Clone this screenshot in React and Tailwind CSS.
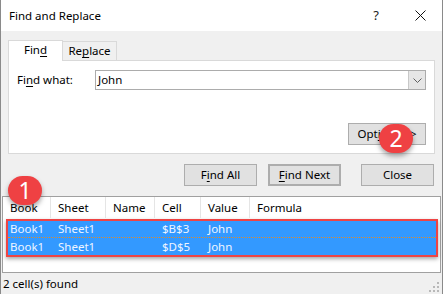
import React from 'react';

const U = ({ children }) => <span className="underline underline-offset-2 decoration-1">{children}</span>;

const Btn = ({ children, className = '' }) => (
    <div className={`h-[22px] w-[73px] flex items-center justify-center bg-[#e1e1e1] border border-[#adadad] text-[11.5px] text-black ${className}`}>
        {children}
    </div>
);

const Badge = ({ n, className }) => (
    <div className={`absolute w-[34px] h-[29px] rounded-full bg-[#ef4143] flex items-center justify-center text-white text-[23px] leading-none shadow-[0_3px_5px_rgba(0,0,0,0.35)] z-20 ${className}`}>
        {n}
    </div>
);

// column widths: header from list's inner left edge (x=3)
const cols = [
    { label: 'Book', w: 'w-[47px]', rw: 'w-[43px]' },
    { label: 'Sheet', w: 'w-[55px]', rw: 'w-[55px]' },
    { label: 'Name', w: 'w-[49px]', rw: 'w-[49px]' },
    { label: 'Cell', w: 'w-[46px]', rw: 'w-[46px]' },
    { label: 'Value', w: 'w-[49px]', rw: 'w-[49px]' },
    { label: 'Formula', w: 'flex-1', rw: 'flex-1' },
];

const rows = [
    ['Book1', 'Sheet1', '', '$B$3', 'John', ''],
    ['Book1', 'Sheet1', '', '$D$5', 'John', ''],
];

export default function App() {
    return (
        <div className="relative w-[443px] h-[294px] bg-[#f0f0f0] border-x border-[#8a8a8a] overflow-hidden text-black" style={{ fontFamily: '"Noto Sans", sans-serif' }}>
            {/* Title bar */}
            <div className="h-[31px] bg-white flex items-center pl-[8px] pr-[16px]">
                <span className="text-[11.5px]">Find and Replace</span>
                <span className="ml-auto text-[13px] text-[#222]">?</span>
                <svg className="ml-[36px]" width="11" height="11" viewBox="0 0 11 11">
                    <path d="M0.5 0.5 L10.5 10.5 M10.5 0.5 L0.5 10.5" stroke="#111" strokeWidth="1" />
                </svg>
            </div>

            {/* Tabs */}
            <div className="flex items-end h-[21px] mt-[8px] ml-[7px]">
                <div className="w-[55px] h-[21px] bg-white border border-[#d9d9d9] border-b-0 relative z-10 -mb-px flex items-center justify-center text-[11.5px] pb-[2px]">
                    Fin<U>d</U>
                </div>
                <div className="w-[54px] h-[19px] border border-[#d9d9d9] border-l-0 border-b-0 flex items-center justify-center text-[11.5px]">
                    Re<U>p</U>lace
                </div>
            </div>

            {/* Panel */}
            <div className="ml-[7px] w-[427px] h-[94px] bg-white border border-[#d9d9d9] px-[8px] pt-[9px]">
                <div className="flex items-center h-[20px]">
                    <span className="w-[78px] text-[11.5px]">Fi<U>n</U>d what:</span>
                    <div className="flex-1 h-[20px] border border-[#acacac] flex items-center">
                        <span className="pl-[2px] text-[11.5px]">John</span>
                        <div className="ml-auto h-full w-[17px] bg-[#e6e6e6] border-l border-[#c8c8c8] flex items-center justify-center">
                            <svg width="9" height="5" viewBox="0 0 9 5">
                                <path d="M0.5 0.5 L4.5 4.5 L8.5 0.5" stroke="#606060" fill="none" strokeWidth="1" />
                            </svg>
                        </div>
                    </div>
                </div>
                <div className="flex justify-end mt-[33px]">
                    <Btn className="w-[78px]">Opt<U>i</U>ons &gt;&gt;</Btn>
                </div>
            </div>

            {/* Action buttons */}
            <div className="flex mt-[10px] pl-[183px]">
                <Btn>F<U>i</U>nd All</Btn>
                <Btn className="ml-[11px] border-2 border-[#0078d7]"><U>F</U>ind Next</Btn>
                <Btn className="ml-[20px]">Close</Btn>
            </div>

            {/* Results list */}
            <div className="ml-[1px] mt-[10px] w-[439px] h-[77px] bg-white border border-[#a0a0a0] pl-[1px]">
                <div className="flex h-[21px] items-center text-[11.5px]">
                    {cols.map((c, i) => (
                        <div key={c.label} className={`${c.w} h-full flex items-center ${i < cols.length - 1 ? 'border-r border-[#e5e5e5]' : ''} ${i > 0 ? 'pl-[7px]' : 'pl-[6px]'}`}>
                            {c.label}
                        </div>
                    ))}
                </div>
                <div className="mx-[2px] mt-[1px] border-2 border-[#ee4444] shadow-[0_2px_4px_rgba(0,0,0,0.35)]">
                    {rows.map((r, ri) => (
                        <div key={ri} className={`flex h-[17px] items-center bg-[#3399ff] text-[11.5px] text-[#eef5ff] ${ri === 0 ? 'border-b border-dotted border-[#e08a2a]' : ''}`}>
                            {r.map((v, ci) => (
                                <div key={ci} className={`${cols[ci].rw} ${ci > 0 ? 'pl-[7px]' : 'pl-[2px]'}`}>{v}</div>
                            ))}
                        </div>
                    ))}
                </div>
            </div>

            {/* Status bar */}
            <div className="relative h-[22px] flex items-center pl-[2px] text-[11.5px]">
                2 cell(s) found
                <svg className="absolute right-[3px] bottom-[3px]" width="10" height="10" viewBox="0 0 10 10">
                    <rect x="8" y="0" width="2" height="2" fill="#b8b8b8" />
                    <rect x="4" y="4" width="2" height="2" fill="#b8b8b8" />
                    <rect x="8" y="4" width="2" height="2" fill="#b8b8b8" />
                    <rect x="0" y="8" width="2" height="2" fill="#b8b8b8" />
                    <rect x="4" y="8" width="2" height="2" fill="#b8b8b8" />
                    <rect x="8" y="8" width="2" height="2" fill="#b8b8b8" />
                </svg>
            </div>

            <Badge n="1" className="left-[7px] top-[176px]" />
            <Badge n="2" className="left-[378px] top-[124px]" />
        </div>
    );
}
